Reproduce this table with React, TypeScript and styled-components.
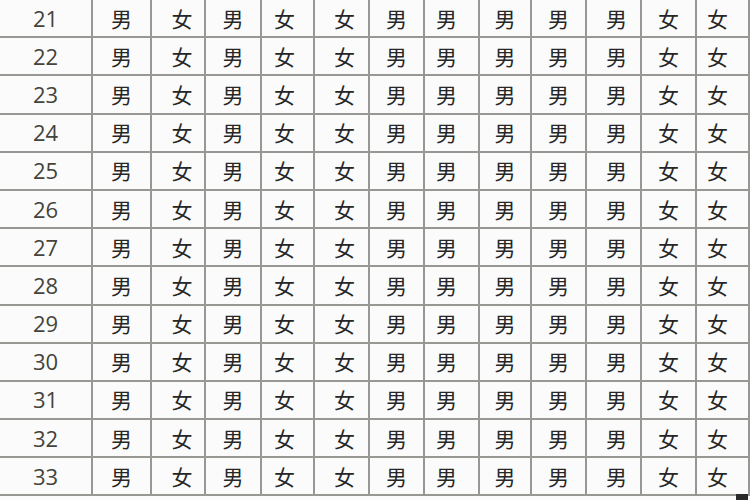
import { Fragment } from "react";
import styled, { createGlobalStyle } from "styled-components";

const GlobalStyle = createGlobalStyle`
  html, body {
    margin: 0;
    padding: 0;
    background: #fbfbfb;
    overflow: hidden;
  }
  * { box-sizing: border-box; }
`;

const widths = [93, 59, 54, 56, 53, 55, 55, 55, 52, 55, 55, 55, 53];
const pattern = ["男", "女", "男", "女", "女", "男", "男", "男", "男", "男", "女", "女"];
// small nudges so the glyphs sit where the scan has them
const nudge = [0, 4, 0, -3, 3, 0, -5, 0, 0, 3, 0, -5];
const ages = [21, 22, 23, 24, 25, 26, 27, 28, 29, 30, 31, 32, 33];

const Page = styled.div`
  position: relative;
  width: 750px;
  height: 500px;
  overflow: hidden;
`;

const Table = styled.div`
  display: grid;
  grid-template-columns: ${widths.map((w) => w + "px").join(" ")};
  grid-auto-rows: 38.2px;
`;

const Cell = styled.div<{ $shift?: number }>`
  display: flex;
  align-items: center;
  justify-content: center;
  border-right: 2px solid #979793;
  border-bottom: 2px solid #979793;
  padding-left: ${(p) => (p.$shift && p.$shift > 0 ? p.$shift * 2 : 0)}px;
  padding-right: ${(p) => (p.$shift && p.$shift < 0 ? -p.$shift * 2 : 0)}px;
  padding-bottom: 1px;
  font-family: "Noto Sans CJK SC", "Noto Sans", sans-serif;
  font-size: 21px;
  font-weight: 400;
  color: #262626;
`;

const AgeCell = styled(Cell)`
  font-family: "Open Sans", "Liberation Sans", sans-serif;
  font-size: 22px;
  font-weight: 500;
  color: #44443a;
`;

const Corner = styled.div`
  position: absolute;
  right: 2px;
  bottom: 0;
  width: 12px;
  height: 6px;
  background: #2a2a2a;
`;

export default function App() {
  return (
    <Page>
      <GlobalStyle />
      <Table>
        {ages.map((age) => (
          <Fragment key={age}>
            <AgeCell>{age}</AgeCell>
            {pattern.map((g, i) => (
              <Cell key={i} $shift={nudge[i]}>
                {g}
              </Cell>
            ))}
          </Fragment>
        ))}
      </Table>
      <Corner />
    </Page>
  );
}
